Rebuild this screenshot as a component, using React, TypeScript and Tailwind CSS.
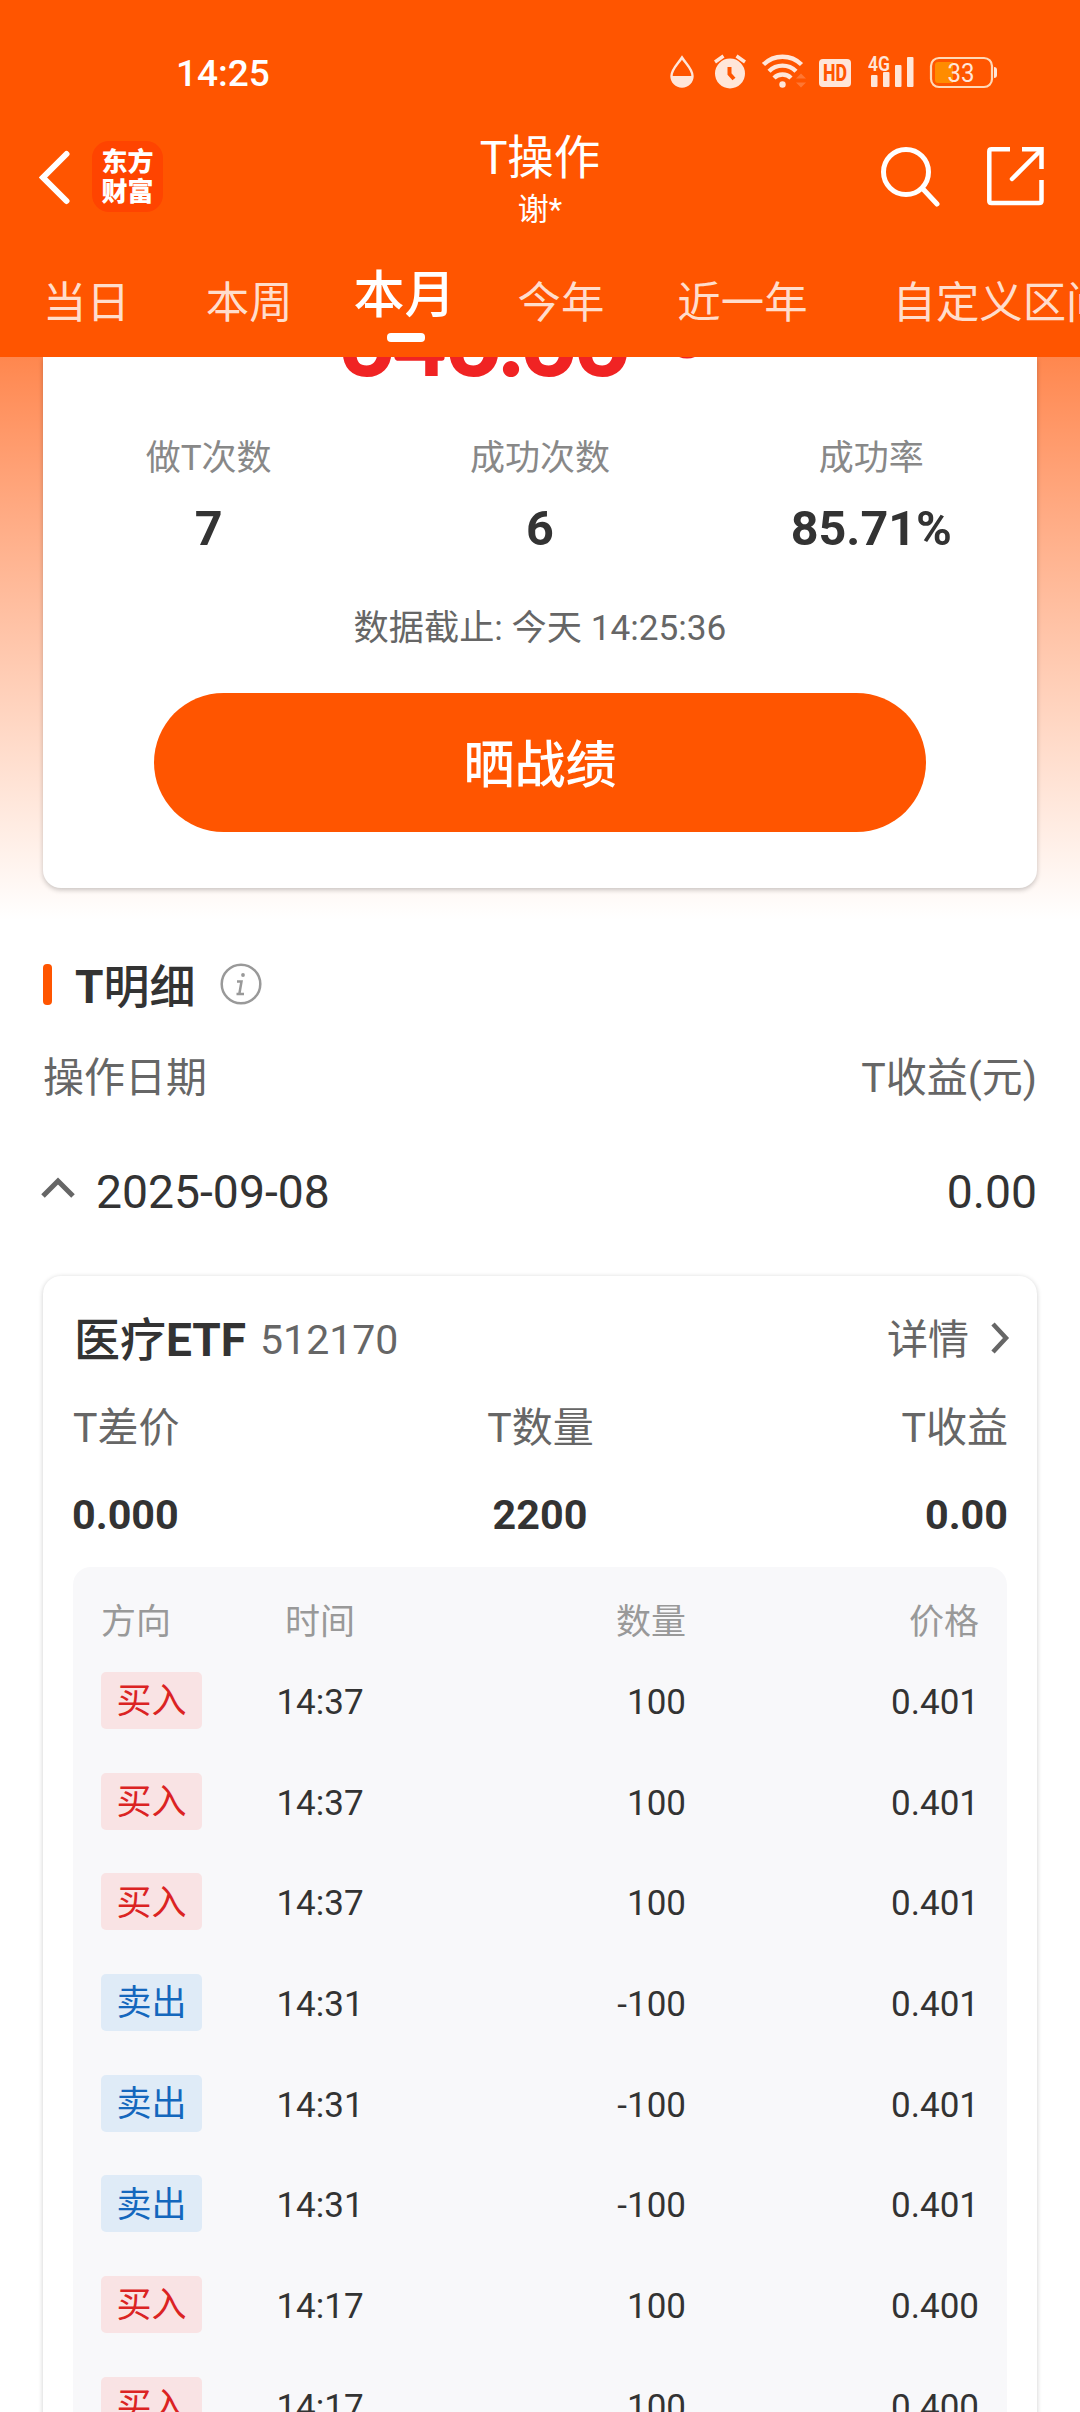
import { clsx } from 'clsx'

const tabs = [
  { label: '当日', spacing: 'ml-[43px]' },
  { label: '本周', spacing: 'ml-[76px]' },
  { label: '本月', spacing: 'ml-[61px]', active: true },
  { label: '今年', spacing: 'ml-[62px]' },
  { label: '近一年', spacing: 'ml-[73px]' },
  { label: '自定义区间', spacing: 'ml-[85px]' },
]

const stats = [
  { label: '做T次数', value: '7' },
  { label: '成功次数', value: '6' },
  { label: '成功率', value: '85.71%' },
]

type Trade = { side: 'buy' | 'sell'; time: string; amount: string; price: string }

const trades: Trade[] = [
  { side: 'buy', time: '14:37', amount: '100', price: '0.401' },
  { side: 'buy', time: '14:37', amount: '100', price: '0.401' },
  { side: 'buy', time: '14:37', amount: '100', price: '0.401' },
  { side: 'sell', time: '14:31', amount: '-100', price: '0.401' },
  { side: 'sell', time: '14:31', amount: '-100', price: '0.401' },
  { side: 'sell', time: '14:31', amount: '-100', price: '0.401' },
  { side: 'buy', time: '14:17', amount: '100', price: '0.400' },
  { side: 'buy', time: '14:17', amount: '100', price: '0.400' },
]

// Drop, alarm, wifi, HD, signal and battery
function StatusIcons() {
  return (
    <svg width="340" height="40" viewBox="0 0 340 40" fill="#ffe6d9" className="block overflow-visible">
      <path d="M12 4.500 C8 11 1.500 16 1.500 23 A10.500 10.500 0 0 0 22.500 23 C22.500 16 16 11 12 4.500 Z" fill="none" stroke="#ffe6d9" strokeWidth="2.400" />
      <path d="M1.500 23 H22.500 A10.500 10.500 0 0 1 1.500 23 Z" />
      <circle cx="60" cy="20.500" r="15" />
      <path d="M45 9 L53.500 3 M75 9 L66.500 3" stroke="#ffe6d9" strokeWidth="3.400" />
      <path d="M59.500 14 V21 L64 26" fill="none" stroke="#ff5500" strokeWidth="4" />
      <g fill="none" stroke="#ffe6d9" strokeWidth="4.400">
        <path d="M93.500 11.500 A27 27 0 0 1 131.500 11.500" />
        <path d="M99 18.300 A19 19 0 0 1 126 18.300" />
        <path d="M104 25 A12 12 0 0 1 121 25" />
      </g>
      <circle cx="112.500" cy="31.500" r="3.200" />
      <path d="M126 25.500 L131 20.500 L136 25.500 Z M126 29.500 L131 34.500 L136 29.500 Z" fill="#ff7733" />
      <rect x="149" y="6" width="32" height="28" rx="4" />
      <text x="165" y="28.200" textAnchor="middle" fontSize="23" fontWeight="800" textLength="24" lengthAdjust="spacingAndGlyphs" fill="#ff5500">HD</text>
      <text x="198" y="17.500" fontSize="21" fontWeight="600" textLength="22" lengthAdjust="spacingAndGlyphs">4G</text>
      <rect x="201" y="22" width="6.500" height="12" rx="1" />
      <rect x="213" y="19" width="6.500" height="15" rx="1" />
      <rect x="225" y="12" width="6.500" height="22" rx="1" />
      <rect x="237" y="4" width="6.500" height="30" rx="1" />
      <rect x="261" y="5" width="61" height="29" rx="8" fill="none" stroke="#ffd9b8" strokeWidth="2.200" />
      <path d="M268 9 H283 V30 H268 Q265 30 265 27 V12 Q265 9 268 9 Z" fill="#ff8c00" />
      <path d="M324 14 Q327 14 327 17 V22 Q327 25 324 25 Z" />
      <text x="291" y="28.500" textAnchor="middle" fontSize="25" textLength="27" lengthAdjust="spacingAndGlyphs">33</text>
    </svg>
  )
}

function Header() {
  return (
    <header className="relative z-10 flex h-[357px] flex-col bg-[#ff5500] text-white">
      <div className="flex h-[131px] items-start justify-between pl-[176px] pr-[70px] pt-[51px]">
        <div className="text-[37px] font-medium leading-[45px]">14:25</div>
        <div className="pt-[2px]">
          <StatusIcons />
        </div>
      </div>
      <div className="grid h-[120px] grid-cols-3">
        <div className="flex items-start gap-[22px] pl-[39px] pt-[10px]">
          <svg width="31" height="72" viewBox="0 0 31 72" fill="none" stroke="white" strokeWidth="6" strokeLinecap="round">
            <path d="M27.500 13 L4 36.500 L27.500 60" />
          </svg>
          <div className="flex size-[71px] flex-col items-center justify-center rounded-[17px] bg-[#ff4400] text-[26px] font-black leading-[30px]">
            <span>东方</span>
            <span>财富</span>
          </div>
        </div>
        <div className="flex flex-col items-center">
          <h1 className="pt-px text-[46.5px] leading-[52px]">T操作</h1>
          <span className="text-[31px] leading-[52px]">谢*</span>
        </div>
        <div className="flex items-start justify-end gap-[46px] pr-[36px] pt-[15px]">
          <svg width="60" height="62" viewBox="0 0 60 62" fill="none" stroke="white" strokeWidth="5" strokeLinecap="round">
            <circle cx="26" cy="26" r="22.500" />
            <path d="M43 43 L57 58" />
          </svg>
          <svg width="58" height="60" viewBox="0 0 58 60" fill="none" stroke="white" strokeWidth="4.500">
            <path d="M24 3.300 H5.500 Q3.300 3.300 3.300 5.500 V55 Q3.300 57 5.500 57 H53 Q55.500 57 55.500 55 V34" />
            <path d="M36 3.300 H55.500 V23" />
            <path d="M54.500 4.500 L26 33" strokeLinecap="round" />
          </svg>
        </div>
      </div>
      <nav className="flex h-[106px] overflow-hidden whitespace-nowrap">
        {tabs.map((tab) => (
          <div key={tab.label} className={clsx('flex shrink-0 flex-col items-center', tab.spacing)}>
            <span
              className={clsx(
                'leading-[60px]',
                tab.active ? 'pt-[15px] text-[51px] font-medium' : 'pt-[23px] text-[43.4px] text-[#ffddcc]'
              )}
            >
              {tab.label}
            </span>
            {tab.active && <span className="mt-[7px] ml-[2px] h-[9px] w-[38px] rounded-[4px] bg-white" />}
          </div>
        ))}
      </nav>
    </header>
  )
}

function SummaryCard() {
  return (
    <section className="h-[563px] bg-gradient-to-b from-[#ff874e] to-white px-[43px]">
      <div className="flex h-[531px] flex-col items-center overflow-hidden rounded-b-[18px] bg-white shadow-[0_2px_5px_rgba(0,0,0,0.22)]">
        <div className="-mt-[68px] flex h-[104px] w-full items-center pl-[297px]">
          <span className="font-[Lato,sans-serif] text-[92px] font-extrabold leading-[104px] text-[#f02323]">646.66</span>
          <svg width="42" height="42" viewBox="0 0 42 42" fill="none" stroke="#f02323" strokeWidth="3" className="mb-[6px] ml-[37px]">
            <circle cx="21" cy="21" r="19" />
            <path d="M21 18 V31 M21 11 V14" />
          </svg>
        </div>
        <div className="mt-[41px] grid w-full grid-cols-3">
          {stats.map((stat) => (
            <div key={stat.label} className="flex flex-col items-center">
              <span className="text-[35px] leading-[50px] text-[#888]">{stat.label}</span>
              <span className="mt-[17px] text-[48.5px] font-bold leading-[56px] text-[#333]">{stat.value}</span>
            </div>
          ))}
        </div>
        <div className="mt-[46px] text-[35.2px] leading-[50px] text-[#666]">数据截止: 今天 14:25:36</div>
        <button className="mt-[40px] h-[139px] w-[772px] shrink-0 rounded-full bg-[#ff5500] pt-[7px] text-[51px] font-medium text-white">
          晒战绩
        </button>
      </div>
    </section>
  )
}

function TradeRow({ trade }: { trade: Trade }) {
  const isBuy = trade.side === 'buy'
  return (
    <div className="flex h-[100.7px] items-start text-[35px] text-[#333]">
      <span
        className={clsx(
          'flex h-[57px] w-[101px] items-center justify-center rounded-[5px] pt-[4px]',
          isBuy ? 'bg-[#f9e3e4] text-[#db2323]' : 'bg-[#dfebf7] text-[#1467bd]'
        )}
      >
        {isBuy ? '买入' : '卖出'}
      </span>
      <span className="ml-[56px] w-[124px] text-center leading-[62px]">{trade.time}</span>
      <span className="w-[304px] text-right leading-[62px]">{trade.amount}</span>
      <span className="flex-1 text-right leading-[62px]">{trade.price}</span>
    </div>
  )
}

function DetailCard() {
  return (
    <div className="mt-[53px] h-[1300px] rounded-[18px] bg-white px-[29px] shadow-[0_1px_5px_rgba(0,0,0,0.2)]">
      <div className="flex items-center pt-[33px] leading-[62px]">
        <span className="ml-[2px] text-[46px] font-medium text-[#333]">
          医疗<span className="font-bold">ETF</span>
        </span>
        <span className="ml-[14px] text-[41px] text-[#666]">512170</span>
        <span className="ml-auto text-[41px] text-[#666]">详情</span>
        <svg width="22" height="34" viewBox="0 0 22 34" fill="none" stroke="#666" strokeWidth="4.500" className="ml-[20px] -mr-[3px] mb-[4px]">
          <path d="M4 3 L17 17 L4 31" />
        </svg>
      </div>
      <div className="mt-[27px] flex justify-between pl-px text-[41px] text-[#666] leading-[60px]">
        <span>T差价</span>
        <span>T数量</span>
        <span>T收益</span>
      </div>
      <div className="mt-[27px] grid grid-cols-3 text-[41.3px] font-bold leading-[60px] text-[#333]">
        <span>0.000</span>
        <span className="text-center">2200</span>
        <span className="text-right">0.00</span>
      </div>
      <div className="mx-px mt-[22px] h-[1000px] rounded-[18px] bg-[#f8f8fa] px-[28px]">
        <div className="flex h-[105px] pt-[31px] text-[35px] leading-[50px] text-[#999]">
          <span className="w-[157px]">方向</span>
          <span className="w-[124px] text-center">时间</span>
          <span className="w-[304px] text-right">数量</span>
          <span className="flex-1 text-right">价格</span>
        </div>
        {trades.map((trade, i) => (
          <TradeRow key={i} trade={trade} />
        ))}
      </div>
    </div>
  )
}

export default function App() {
  return (
    <div className="h-[2412px] w-[1080px] overflow-hidden bg-white font-[Roboto,'Noto_Sans_CJK_SC',sans-serif]">
      <Header />
      <SummaryCard />
      <main className="px-[43px]">
        <div className="flex items-center pt-[31px] leading-[62px]">
          <span className="h-[41px] w-[9px] rounded-[4px] bg-[#ff5500]" />
          <h2 className="ml-[23px] pt-[5px] text-[46px] font-medium text-[#333]">
            <span className="font-bold">T</span>明细
          </h2>
          <svg width="42" height="42" viewBox="0 0 42 42" fill="none" stroke="#999" strokeWidth="2.500" className="mb-[2px] ml-[24px]">
            <circle cx="21" cy="21" r="19.300" />
            <path d="M17 18.500 H21.500 L19.500 30 M16.500 31 H24" />
            <circle cx="23" cy="12" r="1.900" fill="#999" stroke="none" />
          </svg>
        </div>
        <div className="mt-[29px] flex justify-between text-[41px] leading-[62px] text-[#666]">
          <span>操作日期</span>
          <span>T收益(元)</span>
        </div>
        <div className="mt-[52px] flex items-center text-[46.3px] leading-[62px] text-[#333]">
          <svg width="34" height="24" viewBox="0 0 34 24" fill="none" stroke="#666" strokeWidth="5" className="-ml-[2px] mb-[8px]">
            <path d="M2 20 L17 5 L32 20" />
          </svg>
          <span className="ml-[21px]">2025-09-08</span>
          <span className="ml-auto">0.00</span>
        </div>
        <DetailCard />
      </main>
    </div>
  )
}
